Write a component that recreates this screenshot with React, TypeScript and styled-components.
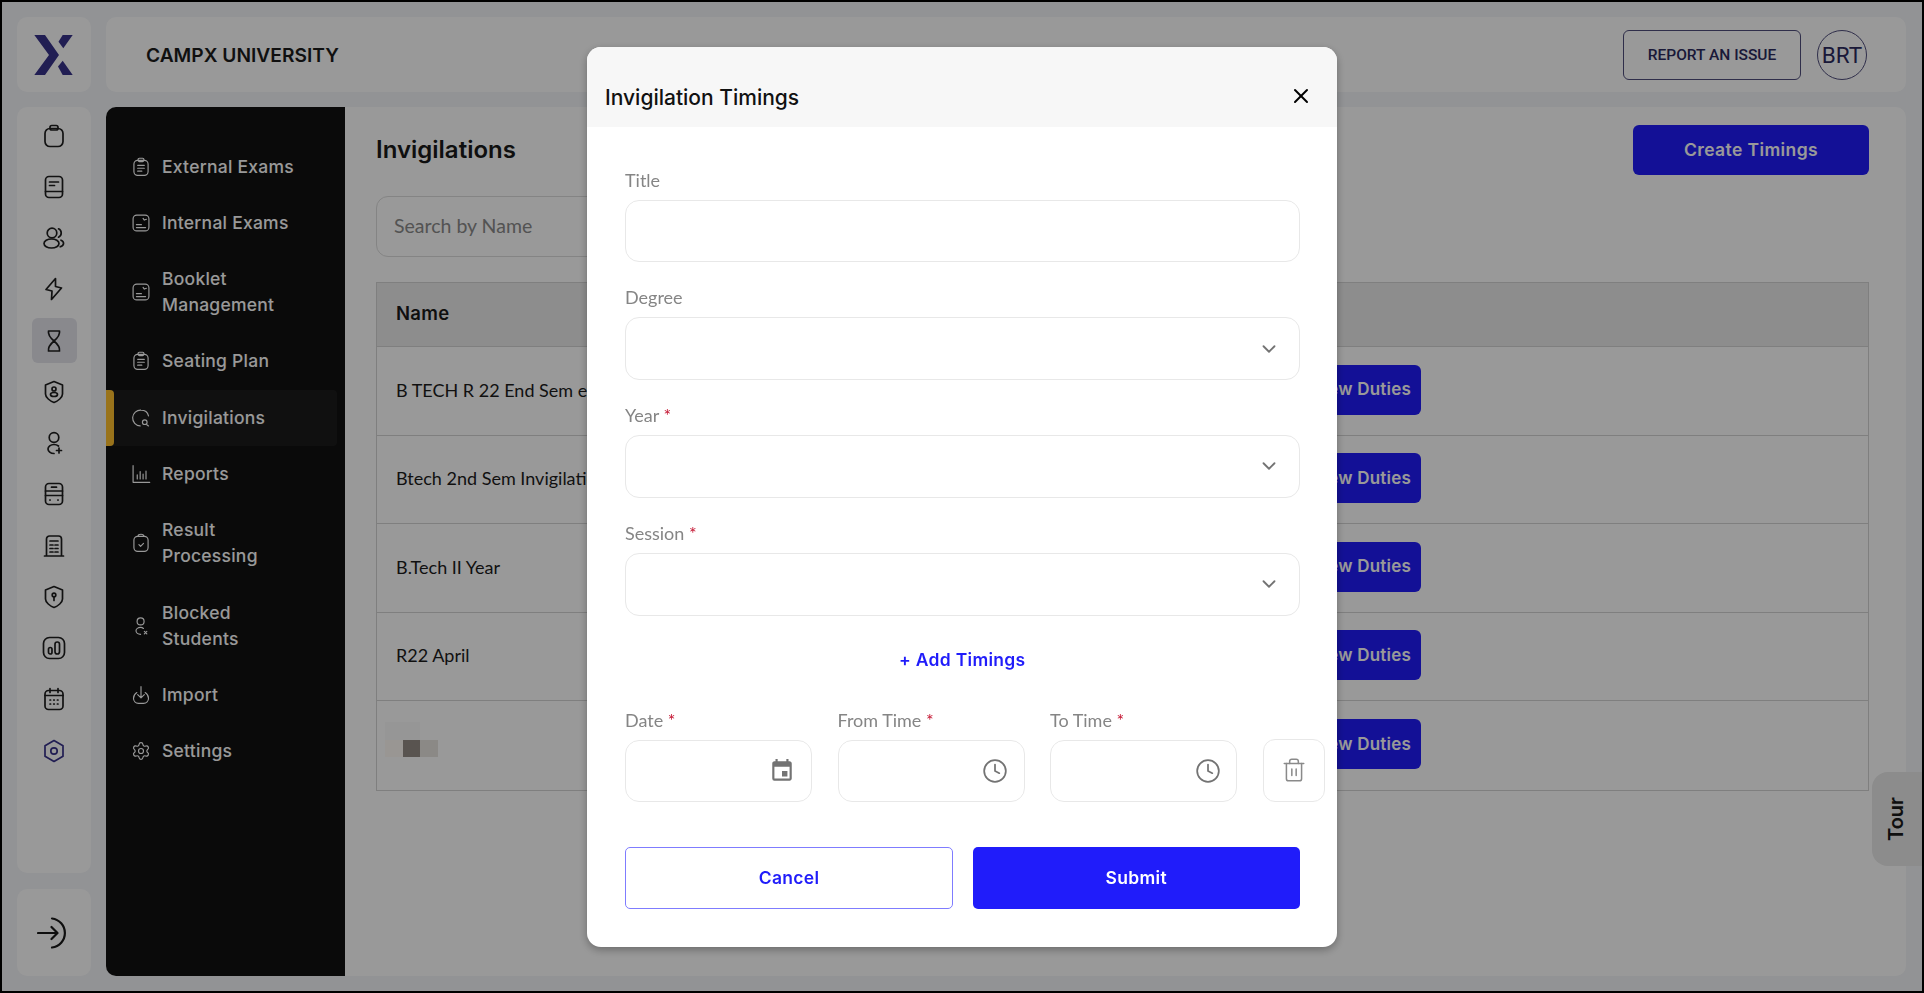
import React from "react";
import styled, { createGlobalStyle } from "styled-components";
import { ChevronDown, Clock, Settings, Trash2, X } from "lucide-react";
import { MdEvent } from "react-icons/md";

const heading = `"Inter", "Liberation Sans", sans-serif`;
const body = `"Lato", "Open Sans", sans-serif`;
const blue = "#201cfa";
const navy = "#38328a";
const ink = "#2c2a5e";

const GlobalStyle = createGlobalStyle`
  * {
    box-sizing: border-box;
  }
  html,
  body {
    margin: 0;
    height: 100%;
    overflow: hidden;
  }
  body {
    font-family: ${body};
  }
`;

const Frame = styled.div`
  position: relative;
  width: 1924px;
  height: 993px;
  border: 2px solid #000;
  background: #f3f5f8;
  display: grid;
  grid-template-columns: 74px 1fr;
  grid-template-rows: 75px 1fr;
  column-gap: 15px;
  row-gap: 15px;
  padding: 15px 16px 15px 15px;
`;

const LogoBox = styled.div`
  background: #fff;
  border-radius: 10px;
  display: flex;
  align-items: center;
  justify-content: center;
`;

const Header = styled.header`
  background: #fff;
  border-radius: 10px;
  display: flex;
  align-items: center;
  justify-content: space-between;
  padding: 0 39px 0 40px;
`;

const College = styled.h1`
  margin: 0;
  font-family: ${heading};
  font-size: 19.2px;
  font-weight: 600;
  color: #1c1c1c;
`;

const HeaderRight = styled.div`
  display: flex;
  align-items: center;
  gap: 16px;
`;

const ReportButton = styled.button`
  width: 178px;
  height: 50px;
  background: transparent;
  border: 1px solid #4f4d7c;
  border-radius: 6px;
  font-family: "Roboto", sans-serif;
  font-size: 15.5px;
  font-weight: 500;
  color: ${ink};
`;

const Avatar = styled.div`
  width: 50px;
  height: 50px;
  border-radius: 50%;
  border: 1px solid #4f4d7c;
  display: flex;
  align-items: center;
  justify-content: center;
  font-family: "Roboto", sans-serif;
  font-size: 22.5px;
  color: ${ink};
`;

const LeftColumn = styled.div`
  display: flex;
  flex-direction: column;
  gap: 16px;
  min-height: 0;
`;

const Rail = styled.nav`
  flex: 1;
  background: #fff;
  border-radius: 10px;
  padding-top: 6px;
  display: flex;
  flex-direction: column;
  align-items: center;
  gap: 6.25px;
`;

const RailItem = styled.div<{ $active?: boolean }>`
  width: 45px;
  height: 45px;
  border-radius: 6px;
  display: flex;
  align-items: center;
  justify-content: center;
  background: ${(p) => (p.$active ? "#e4e4ec" : "transparent")};
`;

const ExitBox = styled.div`
  height: 87px;
  background: #fff;
  border-radius: 10px;
  display: flex;
  align-items: center;
  justify-content: center;
`;

const Glyph = styled.svg.attrs({ viewBox: "0 0 24 24", fill: "none" })<{
  $size: number;
  $color: string;
  $weight: number;
}>`
  width: ${(p) => p.$size}px;
  height: ${(p) => p.$size}px;
  flex: none;
  stroke: ${(p) => p.$color};
  stroke-width: ${(p) => p.$weight};
  stroke-linecap: round;
  stroke-linejoin: round;
`;

const Workspace = styled.div`
  display: flex;
  min-height: 0;
  min-width: 0;
  background: #fff;
  border-radius: 10px;
  overflow: hidden;
`;

const SideMenu = styled.aside`
  width: 239px;
  flex: none;
  background: #111;
  padding-top: 31.5px;
`;

const MenuItem = styled.div<{ $active?: boolean }>`
  position: relative;
  width: 231px;
  padding: 15.15px 0 15.15px 24.5px;
  display: flex;
  align-items: center;
  gap: 11.5px;
  background: ${(p) => (p.$active ? "#1c1c1c" : "transparent")};
  border-radius: 0 4px 4px 0;
  color: #fff;
  font-family: ${heading};
  font-size: 17.5px;
  font-weight: 500;
  letter-spacing: 0.25px;
  line-height: 26px;

  ${(p) =>
    p.$active &&
    `&::before {
      content: "";
      position: absolute;
      left: 0;
      top: 0;
      bottom: 0;
      width: 8px;
      background: #ffc02e;
      border-radius: 0 4px 4px 0;
    }`}
`;

const MenuLine = styled.span`
  display: block;
`;

const Main = styled.main`
  flex: 1;
  min-width: 0;
  padding: 18px 37px 0 31px;
`;

const TitleRow = styled.div`
  display: flex;
  align-items: center;
  justify-content: space-between;
`;

const PageTitle = styled.h2`
  margin: 0 0 2px;
  font-family: ${heading};
  font-size: 24px;
  font-weight: 600;
  color: #1a1a1a;
`;

const PrimaryButton = styled.button`
  height: 50px;
  border: none;
  border-radius: 6px;
  background: ${blue};
  color: #fff;
  font-family: ${heading};
  font-size: 17.5px;
  font-weight: 600;
  letter-spacing: 0.4px;
  padding-bottom: 2px;
`;

const CreateButton = styled(PrimaryButton)`
  width: 236px;
`;

const SearchBox = styled.div`
  margin-top: 21px;
  width: 420px;
  height: 61px;
  border: 1px solid #dcdcdc;
  border-radius: 12px;
  padding: 0 0 2px 17px;
  display: flex;
  align-items: center;
  font-size: 19.5px;
  color: #8a8a8a;
`;

const Table = styled.div`
  margin-top: 25px;
  border: 1px solid #d4d4d4;
`;

const HeadRow = styled.div`
  height: 64px;
  background: #ececec;
  border-bottom: 1px solid #d4d4d4;
  display: flex;
  align-items: center;
  padding: 0 0 4px 19px;
  font-family: ${heading};
  font-size: 18.5px;
  font-weight: 600;
  letter-spacing: 0.3px;
  color: #1a1a1a;
`;

const Row = styled.div`
  height: 88.5px;
  display: flex;
  align-items: center;
  padding: 0 0 2px 19px;
  border-bottom: 1px solid #d4d4d4;
  font-size: 18px;
  color: #1c1c1c;

  &:last-child {
    border-bottom: none;
  }
`;

const RowName = styled.div`
  width: 905px;
  flex: none;
  white-space: nowrap;
`;

const DutiesButton = styled(PrimaryButton)`
  width: 120px;
  font-size: 17px;
  letter-spacing: 0.2px;
`;

const Redacted = styled.div`
  display: grid;
  grid-template-columns: repeat(3, 17.7px);
  grid-template-rows: 18px 17px;
  margin: -9px 0 0 -11px;
`;

const RedactedCell = styled.div<{ $shade: string }>`
  background: ${(p) => p.$shade};
`;

const TourTab = styled.div`
  position: absolute;
  right: 0;
  top: 770px;
  width: 50px;
  height: 94px;
  background: #e9e9e9;
  border-radius: 16px 0 0 16px;
  display: flex;
  align-items: center;
  justify-content: center;
`;

const TourText = styled.span`
  transform: rotate(-90deg);
  margin-right: 2px;
  font-family: ${heading};
  font-size: 20px;
  font-weight: 600;
  color: #1a1a1a;
`;

const Overlay = styled.div`
  position: fixed;
  inset: 0;
  background: rgba(0, 0, 0, 0.4);
  display: flex;
  align-items: center;
  justify-content: center;
`;

const Modal = styled.div`
  width: 750px;
  height: 900px;
  background: #fff;
  border-radius: 14px;
  box-shadow: 0 3px 8px rgba(0, 0, 0, 0.3);
  overflow: hidden;
`;

const ModalHeader = styled.div`
  height: 80px;
  background: #f7f7f7;
  padding: 22px 20.5px 0 18px;
  display: flex;
  align-items: center;
  justify-content: space-between;
`;

const ModalTitle = styled.h3`
  margin: 0;
  font-family: ${heading};
  font-size: 21px;
  font-weight: 500;
  color: #111;
`;

const CloseButton = styled.button`
  width: 32px;
  height: 32px;
  padding: 0;
  margin-top: -4px;
  background: none;
  border: none;
  display: flex;
  align-items: center;
  justify-content: center;
  color: #000;
`;

const ModalBody = styled.div`
  padding: 44px 37.5px 0 38px;
`;

const Field = styled.div`
  margin-bottom: 26px;
`;

const Label = styled.label`
  display: block;
  height: 19px;
  margin-bottom: 10px;
  font-size: 18px;
  line-height: 19px;
  color: #858585;
  white-space: nowrap;
`;

const Required = styled.span`
  color: #c4122f;
`;

const InputShell = styled.div`
  height: 62.8px;
  border: 1.5px solid #e8e8e8;
  border-radius: 14px;
  display: flex;
  align-items: center;
  justify-content: flex-end;
  color: #737373;
`;

const SelectShell = styled(InputShell)`
  padding-right: 19px;
`;

const PickerShell = styled(InputShell)<{ $inset: number }>`
  padding-right: ${(p) => p.$inset}px;
`;

const AddTimings = styled.button`
  display: block;
  margin: 32px auto 39px;
  height: 24px;
  padding: 0;
  background: none;
  border: none;
  font-family: ${heading};
  font-size: 17.5px;
  font-weight: 600;
  letter-spacing: 0.3px;
  color: ${blue};
`;

const TimeRow = styled.div`
  display: flex;
  gap: 25.5px;
  align-items: flex-start;
`;

const TimeField = styled.div`
  width: 187px;
  flex: none;
`;

const TrashButton = styled.button`
  width: 62px;
  height: 63px;
  flex: none;
  margin-top: 28px;
  padding: 0;
  background: #fff;
  border: 1.5px solid #e8e8e8;
  border-radius: 12px;
  display: flex;
  align-items: center;
  justify-content: center;
  color: #8a8a8a;
`;

const Actions = styled.div`
  margin-top: 45px;
  display: grid;
  grid-template-columns: 328px 326.5px;
  gap: 20px;
`;

const CancelButton = styled.button`
  height: 62px;
  padding-bottom: 2px;
  background: #fff;
  border: 1px solid #7f7cff;
  border-radius: 5px;
  font-family: ${heading};
  font-size: 17.5px;
  font-weight: 600;
  letter-spacing: 0.3px;
  color: ${blue};
`;

const SubmitButton = styled(PrimaryButton)`
  height: 62px;
  border-radius: 5px;
  letter-spacing: 0.3px;
`;

const railIcons: React.ReactNode[] = [
  <>
    <rect x="3" y="4.5" width="18" height="18" rx="5" />
    <rect x="8" y="1.5" width="8" height="4.5" rx="1.8" />
  </>,
  <>
    <rect x="3.5" y="1.5" width="17" height="21" rx="3.5" />
    <path d="M3.5 16.5h17M7.5 7h9M7.5 10.5h5" />
  </>,
  <>
    <circle cx="10" cy="7" r="4.8" />
    <ellipse cx="9.5" cy="17.5" rx="7.5" ry="4.5" />
    <path d="M16.5 2.8a4.6 4.6 0 0 1 0 8.4M19 14.2c3.6 1.6 3.4 5.2-.8 6.6" />
  </>,
  <path d="M13.5 1.5 4 12.5l6 1.5-.5 8.5L19.5 11l-6-1.5z" />,
  <path d="M6.5 2h11c.6 3.5-2 7-5.5 10 3.5 3 6.1 6.5 5.5 10h-11C5.9 18.5 8.5 15 12 12 8.5 9 5.9 5.5 6.5 2z" />,
  <>
    <path d="M12 1.5 20.5 5v9c0 3.5-4.5 7-8.5 8.500C8 21 3.5 17.5 3.5 14V5z" />
    <circle cx="12" cy="9" r="2" />
    <ellipse cx="12" cy="14.5" rx="3.5" ry="2" />
  </>,
  <>
    <circle cx="12" cy="6.5" r="4.8" />
    <path d="M16.5 15c-1.300-1-2.800-1.500-4.500-1.500-3.500 0-6 2.200-6 4.500s2.500 4.500 6 4.500" />
    <path d="M17 17v5M14.500 19.500h5" />
  </>,
  <>
    <rect x="3.5" y="1.5" width="17" height="21" rx="3.5" />
    <path d="M3.500 9h17M3.500 13.500h17M9.500 5.200h5M7.800 18h.4M15.800 18h.4" />
  </>,
  <>
    <path d="M4.500 22V5a3 3 0 0 1 3-3h9a3 3 0 0 1 3 3v17M2.500 22h19" />
    <path d="M8 7h8M8 11h3M13 11h3M8 14.500h3M13 14.500h3M8 18h3M13 18h3" />
  </>,
  <>
    <path d="M12 1.500 20.500 5v9c0 3.500-4.500 7-8.500 8.500C8 21 3.500 17.500 3.500 14V5z" />
    <circle cx="12" cy="10" r="1.8" />
    <path d="M12 12v3.500" />
  </>,
  <>
    <rect x="1.5" y="1.5" width="21" height="21" rx="6" />
    <rect x="6.5" y="11.5" width="3.5" height="6.5" rx="1.75" />
    <rect x="13" y="6" width="4.5" height="12" rx="2.25" />
  </>,
  <>
    <rect x="3" y="3.5" width="18" height="19" rx="3.5" />
    <path d="M8 1.500v4M16 1.500v4M3 8.500h18M8 13h.6M11.700 13h.6M15.400 13h.6M8 17h.6M11.700 17h.6M15.400 17h.6" />
  </>,
  <>
    <path d="M12 1.500 21 6.700v10.600l-9 5.200-9-5.200V6.700z" />
    <circle cx="12" cy="12" r="3.2" />
  </>,
];

const examClip = (
  <>
    <rect x="3.5" y="4" width="17" height="18" rx="4.5" />
    <rect x="8.5" y="1.5" width="7" height="4" rx="1.5" />
    <path d="M8 10h8M8 13.500h8M8 17h5" />
  </>
);

const examSheet = (
  <>
    <rect x="2.5" y="2.5" width="19" height="19" rx="4.5" />
    <path d="M6.500 14h6M6.500 17.500h11M14.500 6.500l1.500 2 2.500-1" />
  </>
);

const menu: { lines: string[]; icon: React.ReactNode; active?: boolean }[] = [
  { lines: ["External Exams"], icon: examClip },
  { lines: ["Internal Exams"], icon: examSheet },
  { lines: ["Booklet", "Management"], icon: examSheet },
  { lines: ["Seating Plan"], icon: examClip },
  {
    lines: ["Invigilations"],
    active: true,
    icon: (
      <>
        <path d="M21 9.500C20 5 16.500 2.500 12 2.500a9.500 9.500 0 0 0-1 19" />
        <circle cx="16.5" cy="17" r="2.8" />
        <path d="m19 20 2 1.500" />
      </>
    ),
  },
  {
    lines: ["Reports"],
    icon: <path d="M2.500 2v20h20M7.500 18v-5M11 18V9M14.500 18v-6M18 18V8.500" />,
  },
  {
    lines: ["Result", "Processing"],
    icon: (
      <>
        <rect x="3.5" y="4" width="17" height="18" rx="4.5" />
        <path d="M8.500 4c0-1.500 1-2.500 3.500-2.500s3.500 1 3.500 2.500M9.500 14l2 2 3.500-3.500" />
      </>
    ),
  },
  {
    lines: ["Blocked", "Students"],
    icon: (
      <>
        <circle cx="11.5" cy="6.5" r="4.2" />
        <path d="M15 15c-1-.8-2.200-1.300-3.500-1.300C8.500 13.700 6 15.500 6 17.800s2.500 4.200 5.500 4.200" />
        <path d="m16 18.500 3 3M19 18.500l-3 3" />
      </>
    ),
  },
  {
    lines: ["Import"],
    icon: (
      <>
        <path d="M12 2v13M8 11.500l4 4 4-4" />
        <path d="M7 9a8.500 8.500 0 0 0-4 7c0 3.500 2.500 6 6 6h6c3.500 0 6-2.500 6-6a8.500 8.500 0 0 0-4-7" />
      </>
    ),
  },
];

const rows = [
  "B TECH R 22 End Sem examinations",
  "Btech 2nd Sem Invigilation",
  "B.Tech II Year",
  "R22 April",
];

const redactedShades = ["#fafafa", "#fafafa", "transparent", "#fffbf6", "#958d85", "#e8e4df"];

function Mark() {
  return (
    <svg width="40" height="42" viewBox="34 34 40 42" aria-label="CampX">
      <polygon points="34.3,35 45,35 59,55 45,75 34.3,75 49,55" fill={navy} />
      <polygon points="62.7,35 72.7,35 63.3,48.3 58.5,41.7" fill={navy} />
      <polygon points="62.7,60.7 72.7,75 62.7,75 58,66.5" fill={navy} />
    </svg>
  );
}

function ExitIcon() {
  return (
    <svg width="34" height="32" viewBox="0 0 34 32" fill="none" stroke="#1a1a1a" strokeWidth="2.2" strokeLinecap="round" strokeLinejoin="round">
      <path d="M15 1.500a14.600 14.600 0 0 1 0 29" />
      <path d="M1 16h19M14.500 10l6 6-6 6" />
    </svg>
  );
}

function Star() {
  return <Required> *</Required>;
}

export default function App() {
  return (
    <>
      <GlobalStyle />
      <Frame>
        <LogoBox>
          <Mark />
        </LogoBox>
        <Header>
          <College>CAMPX UNIVERSITY</College>
          <HeaderRight>
            <ReportButton>REPORT AN ISSUE</ReportButton>
            <Avatar>BRT</Avatar>
          </HeaderRight>
        </Header>

        <LeftColumn>
          <Rail>
            {railIcons.map((icon, i) => (
              <RailItem key={i} $active={i === 4}>
                <Glyph $size={24} $color={i === 12 ? navy : "#1f1f1f"} $weight={1.7}>
                  {icon}
                </Glyph>
              </RailItem>
            ))}
          </Rail>
          <ExitBox>
            <ExitIcon />
          </ExitBox>
        </LeftColumn>

        <Workspace>
          <SideMenu>
            {menu.map((item) => (
              <MenuItem key={item.lines[0]} $active={item.active}>
                <Glyph $size={20} $color="#fff" $weight={1.4}>
                  {item.icon}
                </Glyph>
                <div>
                  {item.lines.map((line) => (
                    <MenuLine key={line}>{line}</MenuLine>
                  ))}
                </div>
              </MenuItem>
            ))}
            <MenuItem>
              <Settings size={20} strokeWidth={1.4} />
              <div>Settings</div>
            </MenuItem>
          </SideMenu>

          <Main>
            <TitleRow>
              <PageTitle>Invigilations</PageTitle>
              <CreateButton>Create Timings</CreateButton>
            </TitleRow>
            <SearchBox>Search by Name</SearchBox>
            <Table>
              <HeadRow>Name</HeadRow>
              {rows.map((name) => (
                <Row key={name}>
                  <RowName>{name}</RowName>
                  <DutiesButton>View Duties</DutiesButton>
                </Row>
              ))}
              <Row>
                <RowName>
                  <Redacted>
                    {redactedShades.map((shade, i) => (
                      <RedactedCell key={i} $shade={shade} />
                    ))}
                  </Redacted>
                </RowName>
                <DutiesButton>View Duties</DutiesButton>
              </Row>
            </Table>
          </Main>
        </Workspace>

        <TourTab>
          <TourText>Tour</TourText>
        </TourTab>
      </Frame>

      <Overlay>
        <Modal>
          <ModalHeader>
            <ModalTitle>Invigilation Timings</ModalTitle>
            <CloseButton>
              <X size={24} strokeWidth={2} />
            </CloseButton>
          </ModalHeader>
          <ModalBody>
            <Field>
              <Label>Title</Label>
              <InputShell />
            </Field>
            <Field>
              <Label>Degree</Label>
              <SelectShell>
                <ChevronDown size={22} strokeWidth={2} />
              </SelectShell>
            </Field>
            <Field>
              <Label>
                Year
                <Star />
              </Label>
              <SelectShell>
                <ChevronDown size={22} strokeWidth={2} />
              </SelectShell>
            </Field>
            <Field>
              <Label>
                Session
                <Star />
              </Label>
              <SelectShell>
                <ChevronDown size={22} strokeWidth={2} />
              </SelectShell>
            </Field>
            <AddTimings>+ Add Timings</AddTimings>
            <TimeRow>
              <TimeField>
                <Label>
                  Date
                  <Star />
                </Label>
                <PickerShell $inset={16.5}>
                  <MdEvent size={26} />
                </PickerShell>
              </TimeField>
              <TimeField>
                <Label>
                  From Time
                  <Star />
                </Label>
                <PickerShell $inset={15.5}>
                  <Clock size={26} strokeWidth={1.6} />
                </PickerShell>
              </TimeField>
              <TimeField>
                <Label>
                  To Time
                  <Star />
                </Label>
                <PickerShell $inset={15.5}>
                  <Clock size={26} strokeWidth={1.6} />
                </PickerShell>
              </TimeField>
              <TrashButton>
                <Trash2 size={26} strokeWidth={1.4} />
              </TrashButton>
            </TimeRow>
            <Actions>
              <CancelButton>Cancel</CancelButton>
              <SubmitButton>Submit</SubmitButton>
            </Actions>
          </ModalBody>
        </Modal>
      </Overlay>
    </>
  );
}
